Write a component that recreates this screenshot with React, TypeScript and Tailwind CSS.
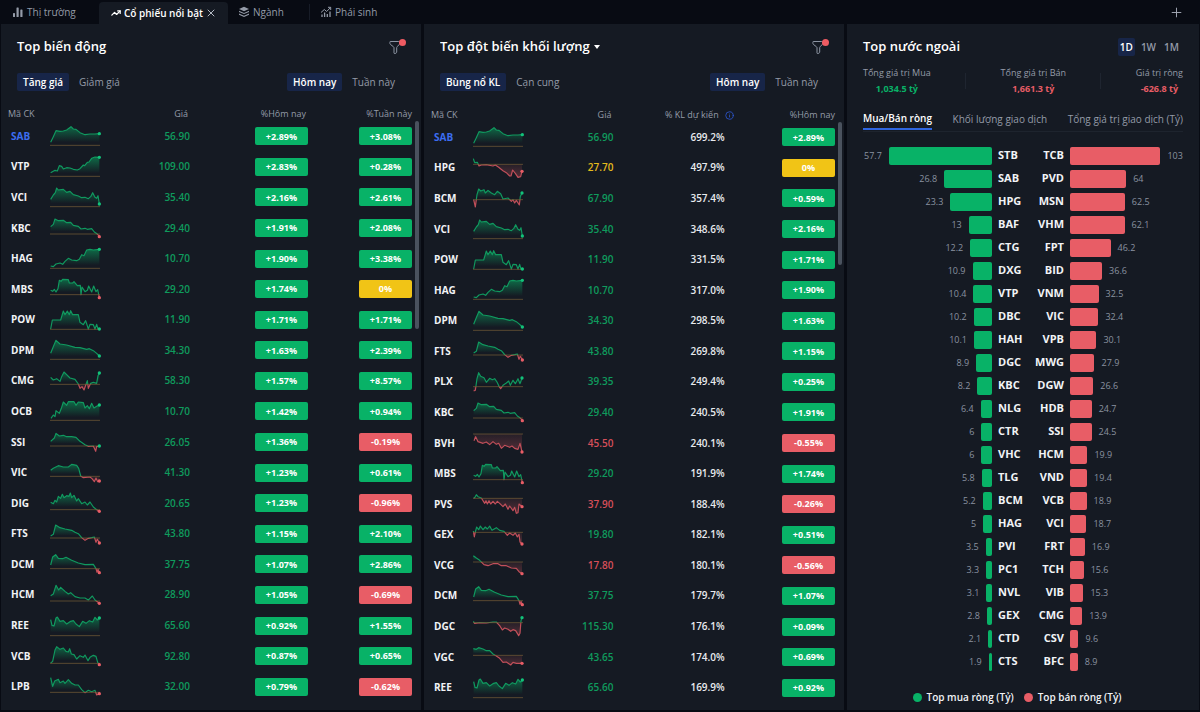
import { useId, useState } from "react";
import { Info, Plus, TrendingUp, X } from "lucide-react";

type Spark = { base: number; pts: string };

// Intraday lines, drawn on a 150x72 grid. "base" is the reference price level.
const SPARKS: Record<string, Spark> = {
    SAB: { base: 64, pts: "2,55 10,38 18,20 30,22 40,21 50,18 55,14 63,8 70,15 78,16 90,26 105,32 120,30 135,30 148,29" },
    VTP: { base: 64, pts: "2,53 15,46 22,48 28,32 35,34 40,42 50,38 60,39 70,43 82,45 90,41 100,30 104,32 112,22 117,21 125,10 135,6 148,7" },
    VCI: { base: 65, pts: "2,43 10,30 16,23 20,9 25,15 40,13 50,22 60,19 70,29 85,33 95,38 105,37 115,41 122,35 128,23 135,37 140,40 144,32 148,57" },
    KBC: { base: 54, pts: "2,32 10,25 15,9 25,14 40,13 50,20 62,19 70,28 85,31 93,39 105,37 112,40 125,38 133,48 142,54 148,62" },
    HAG: { base: 64, pts: "2,57 10,59 18,51 30,48 38,52 45,43 55,34 65,39 80,41 88,37 95,23 102,26 110,9 120,7 130,9 148,7" },
    MBS: { base: 53, pts: "2,40 8,43 13,37 18,45 24,35 28,10 33,13 38,7 55,8 58,18 68,18 72,14 82,26 91,25 93,53 96,30 105,44 112,40 116,27 125,45 131,27 138,44 143,38 148,62" },
    POW: { base: 64, pts: "2,63 7,36 32,36 40,9 45,20 52,9 58,20 62,8 68,20 85,20 90,43 100,50 107,38 115,63 120,49 130,50 135,63 140,49 144,63 148,63" },
    DPM: { base: 64, pts: "2,46 12,21 18,7 30,18 50,21 75,28 90,29 110,34 118,32 130,38 140,46 148,54" },
    CMG: { base: 46, pts: "2,25 10,33 20,29 30,37 35,23 42,9 50,17 60,27 75,31 85,45 90,58 96,53 102,63 112,35 115,58 122,43 130,40 140,43 144,20 148,12" },
    OCB: { base: 64, pts: "3,58 10,48 15,53 18,35 28,43 34,28 40,9 50,19 55,8 72,8 78,19 85,9 100,11 105,27 112,20 118,29 125,13 132,27 140,22 148,18" },
    SSI: { base: 48, pts: "2,34 13,24 18,10 28,18 40,16 50,20 65,20 78,22 90,34 105,44 115,49 130,48 137,64 140,50 148,48" },
    VIC: { base: 46, pts: "2,28 10,22 25,14 40,18 55,18 65,10 80,13 86,22 92,45 100,50 120,48 126,53 133,62 138,51 143,62 148,60" },
    DIG: { base: 56, pts: "2,34 10,38 15,28 20,33 25,16 32,22 37,10 42,20 50,14 57,16 61,6 65,20 72,13 80,30 85,23 95,38 105,33 112,42 120,33 130,48 140,56 148,61" },
    FTS: { base: 48, pts: "2,42 10,37 17,9 30,17 45,21 65,25 75,31 85,35 95,47 105,55 115,49 125,47 133,45 138,61 142,52 148,63" },
    DCM: { base: 50, pts: "2,39 8,15 17,8 25,19 38,20 48,16 65,25 85,33 105,38 130,37 138,50 141,61 144,52 148,62" },
    HCM: { base: 54, pts: "2,38 10,33 18,7 26,21 32,13 45,25 55,33 62,29 75,41 90,45 105,45 115,51 120,46 127,39 135,51 148,61" },
    REE: { base: 65, pts: "2,17 6,34 12,36 18,12 22,9 30,22 40,20 50,30 62,22 70,20 78,30 88,38 98,22 108,28 118,20 128,24 135,10 142,18 148,12" },
    VCB: { base: 58, pts: "2,57 8,52 15,18 20,8 30,16 40,12 48,22 55,24 59,14 64,30 72,32 80,45 90,35 100,40 105,33 114,50 120,40 130,34 138,37 143,55 148,62" },
    LPB: { base: 52, pts: "2,8 8,34 14,18 25,13 30,23 40,18 45,25 55,14 65,25 75,30 85,30 95,44 105,53 115,46 125,50 135,46 140,60 148,56" },
    HPG: { base: 25, pts: "1,8 5,20 13,19 18,30 25,27 40,26 60,30 67,27 77,34 90,44 100,50 110,60 114,60 119,42 127,52 135,64 143,62 147,46" },
    BCM: { base: 41, pts: "2,41 7,63 12,26 17,9 23,15 33,11 37,21 45,13 55,21 65,26 73,16 83,23 90,39 105,36 115,46 120,41 125,51 130,43 139,57 142,31 147,21" },
    PLX: { base: 50, pts: "2,63 7,61 12,26 17,8 23,19 33,23 40,37 50,25 58,29 65,26 72,36 78,49 83,56 90,46 100,39 107,33 112,46 120,31 127,41 135,26 141,41 147,24" },
    BVH: { base: 9, pts: "3,29 8,17 15,32 30,37 40,33 50,41 60,32 70,40 77,37 85,52 95,43 110,49 117,45 125,52 135,55 141,37 147,63" },
    PVS: { base: 19, pts: "2,19 6,16 10,8 15,14 25,18 35,34 39,26 43,36 48,26 53,36 60,28 67,36 73,28 80,34 90,44 97,36 105,52 110,42 120,56 125,46 130,64 135,62 138,36 147,44" },
    GEX: { base: 28, pts: "1,24 4,42 7,27 11,12 17,20 22,9 30,20 37,12 43,18 50,9 57,22 70,14 80,22 93,25 103,37 110,30 120,37 127,30 133,42 138,34 141,57 147,63" },
    VCG: { base: 27, pts: "1,8 10,15 20,22 33,35 45,38 60,32 75,32 85,38 100,38 115,45 130,46 138,56 147,62" },
    DGC: { base: 23, pts: "1,19 5,25 20,23 40,24 60,21 70,21 80,32 88,45 95,39 105,43 113,49 120,44 128,47 137,62 141,55 144,17 147,8" },
    VGC: { base: 31, pts: "1,11 10,13 17,8 30,12 40,17 50,17 60,27 70,33 80,40 90,52 100,51 113,60 120,52 130,55 147,55" },
};

// symbol, price, % today, % week
const MOVERS: [string, string, string, string][] = [
    ["SAB", "56.90", "+2.89%", "+3.08%"],
    ["VTP", "109.00", "+2.83%", "+0.28%"],
    ["VCI", "35.40", "+2.16%", "+2.61%"],
    ["KBC", "29.40", "+1.91%", "+2.08%"],
    ["HAG", "10.70", "+1.90%", "+3.38%"],
    ["MBS", "29.20", "+1.74%", "0%"],
    ["POW", "11.90", "+1.71%", "+1.71%"],
    ["DPM", "34.30", "+1.63%", "+2.39%"],
    ["CMG", "58.30", "+1.57%", "+8.57%"],
    ["OCB", "10.70", "+1.42%", "+0.94%"],
    ["SSI", "26.05", "+1.36%", "-0.19%"],
    ["VIC", "41.30", "+1.23%", "+0.61%"],
    ["DIG", "20.65", "+1.23%", "-0.96%"],
    ["FTS", "43.80", "+1.15%", "+2.10%"],
    ["DCM", "37.75", "+1.07%", "+2.86%"],
    ["HCM", "28.90", "+1.05%", "-0.69%"],
    ["REE", "65.60", "+0.92%", "+1.55%"],
    ["VCB", "92.80", "+0.87%", "+0.65%"],
    ["LPB", "32.00", "+0.79%", "-0.62%"],
];

// symbol, price, projected volume, % today
const VOLUMES: [string, string, string, string][] = [
    ["SAB", "56.90", "699.2%", "+2.89%"],
    ["HPG", "27.70", "497.9%", "0%"],
    ["BCM", "67.90", "357.4%", "+0.59%"],
    ["VCI", "35.40", "348.6%", "+2.16%"],
    ["POW", "11.90", "331.5%", "+1.71%"],
    ["HAG", "10.70", "317.0%", "+1.90%"],
    ["DPM", "34.30", "298.5%", "+1.63%"],
    ["FTS", "43.80", "269.8%", "+1.15%"],
    ["PLX", "39.35", "249.4%", "+0.25%"],
    ["KBC", "29.40", "240.5%", "+1.91%"],
    ["BVH", "45.50", "240.1%", "-0.55%"],
    ["MBS", "29.20", "191.9%", "+1.74%"],
    ["PVS", "37.90", "188.4%", "-0.26%"],
    ["GEX", "19.80", "182.1%", "+0.51%"],
    ["VCG", "17.80", "180.1%", "-0.56%"],
    ["DCM", "37.75", "179.7%", "+1.07%"],
    ["DGC", "115.30", "176.1%", "+0.09%"],
    ["VGC", "43.65", "174.0%", "+0.69%"],
    ["REE", "65.60", "169.9%", "+0.92%"],
];

// net buy, net sell
const FOREIGN: [string, number, string, number][] = [
    ["STB", 57.7, "TCB", 103],
    ["SAB", 26.8, "PVD", 64],
    ["HPG", 23.3, "MSN", 62.5],
    ["BAF", 13, "VHM", 62.1],
    ["CTG", 12.2, "FPT", 46.2],
    ["DXG", 10.9, "BID", 36.6],
    ["VTP", 10.4, "VNM", 32.5],
    ["DBC", 10.2, "VIC", 32.4],
    ["HAH", 10.1, "VPB", 30.1],
    ["DGC", 8.9, "MWG", 27.9],
    ["KBC", 8.2, "DGW", 26.6],
    ["NLG", 6.4, "HDB", 24.7],
    ["CTR", 6, "SSI", 24.5],
    ["VHC", 6, "HCM", 19.9],
    ["TLG", 5.8, "VND", 19.4],
    ["BCM", 5.2, "VCB", 18.9],
    ["HAG", 5, "VCI", 18.7],
    ["PVI", 3.5, "FRT", 16.9],
    ["PC1", 3.3, "TCH", 15.6],
    ["NVL", 3.1, "VIB", 15.3],
    ["GEX", 2.8, "CMG", 13.9],
    ["CTD", 2.1, "CSV", 9.6],
    ["CTS", 1.9, "BFC", 8.9],
];

function Sparkline({ symbol }: { symbol: string }) {
    const id = useId();
    const { base, pts } = SPARKS[symbol];
    const all = pts.split(" ");
    const [firstX] = all[0].split(",");
    const [lastX, lastY] = all[all.length - 1].split(",");
    const area = `${firstX},${base} ${pts} ${lastX},${base}`;
    return (
        <svg viewBox="0 0 150 72" width="50" height="24" className="block overflow-visible" aria-hidden="true">
            <defs>
                <linearGradient id={`${id}u`} x1="0" x2="0" y1="0" y2={base} gradientUnits="userSpaceOnUse">
                    <stop offset="0" stopColor="#08b267" stopOpacity="0.6" />
                    <stop offset="0.85" stopColor="#08b267" stopOpacity="0" />
                </linearGradient>
                <linearGradient id={`${id}d`} x1="0" x2="0" y1={base} y2="72" gradientUnits="userSpaceOnUse">
                    <stop offset="0" stopColor="#e85d66" stopOpacity="0.08" />
                    <stop offset="1" stopColor="#e85d66" stopOpacity="0.35" />
                </linearGradient>
                <clipPath id={`${id}a`}><rect x="-4" y="-4" width="160" height={base + 4} /></clipPath>
                <clipPath id={`${id}b`}><rect x="-4" y={base} width="160" height={80 - base} /></clipPath>
            </defs>
            <g clipPath={`url(#${id}a)`}>
                <polygon points={area} fill={`url(#${id}u)`} />
                <polyline points={pts} fill="none" stroke="#10995f" strokeWidth="3.5" strokeLinejoin="round" />
            </g>
            <g clipPath={`url(#${id}b)`}>
                <polygon points={area} fill={`url(#${id}d)`} />
                <polyline points={pts} fill="none" stroke="#c14f5a" strokeWidth="3.5" strokeLinejoin="round" />
            </g>
            <line x1="0" x2="150" y1={base} y2={base} stroke="#8a6a3a" strokeOpacity="0.7" strokeWidth="2.500" />
            <circle cx={lastX} cy={lastY} r="5" fill={Number(lastY) > base ? "#e85d66" : "#12c27a"} />
        </svg>
    );
}

function Badge({ value }: { value: string }) {
    const color = value === "0%" ? "bg-[#f1c416]" : value.startsWith("-") ? "bg-[#e85d66]" : "bg-[#08b267]";
    return (
        <span className={`ml-auto flex h-[18px] w-[53px] items-center justify-center rounded-[2px] text-[9px] font-bold text-white ${color}`}>
            {value}
        </span>
    );
}

function priceColor(pct: string) {
    if (pct === "0%") return "text-[#e5bb1c]";
    return pct.startsWith("-") ? "text-[#d64f5a]" : "text-[#0f9b5d]";
}

function FilterButton() {
    return (
        <button type="button" aria-label="Bộ lọc" className="relative h-4 w-4">
            <svg viewBox="0 0 16 16" width="16" height="16" fill="none" stroke="#8d95a3" strokeWidth="1" strokeLinejoin="round">
                <path d="M1.200 2.500h8.600c.7 0 1 .3 1 .9v.9c0 .5-.2.8-.6 1.200L8.200 7.700c-.3.300-.5.600-.5 1v4.300c0 .5-.2.800-.6 1l-1 .5c-.6.3-1.100 0-1.100-.6V8.800c0-.4-.2-.7-.5-1L1.500 5.500c-.4-.4-.6-.8-.6-1.200V3.400c0-.6.2-.9.300-.9Z" />
            </svg>
            <span className="absolute -right-px top-0 h-[7px] w-[7px] rounded-full bg-[#ef5b62]" />
        </button>
    );
}

function Pills({ items }: { items: string[] }) {
    const [active, setActive] = useState(items[0]);
    return (
        <div className="flex gap-1">
            {items.map((item) => (
                <button
                    key={item}
                    type="button"
                    onClick={() => setActive(item)}
                    className={`h-[18px] rounded-[2px] px-[6px] text-[10px] leading-[18px] ${item === active ? "bg-[#172548] font-semibold text-white" : "text-[#949ba8]"}`}
                >
                    {item}
                </button>
            ))}
        </div>
    );
}

function SymbolCell({ symbol }: { symbol: string }) {
    return (
        <td className={`py-0 pl-1 text-[10px] font-bold ${symbol === "SAB" ? "text-[#3c6df0]" : "text-[#f1f3f6]"}`}>{symbol}</td>
    );
}

function BarsIcon() {
    return (
        <svg viewBox="0 0 12 12" width="12" height="12" fill="#949ba8" aria-hidden="true">
            <rect x="1" y="7" width="2" height="4" rx="0.6" />
            <rect x="4.500" y="1.500" width="2.200" height="9.500" rx="0.6" />
            <rect x="8.300" y="3.500" width="2.200" height="7.500" rx="0.6" />
        </svg>
    );
}

function LayersIcon() {
    return (
        <svg viewBox="0 0 12 12" width="12" height="12" fill="#949ba8" aria-hidden="true">
            <path d="M6 .8 11 3 6 5.200 1 3Z" />
            <path d="M1 4.800 6 7l5-2.200v1.100L6 8.100 1 5.900Z" />
            <path d="M1 7.600 6 9.800l5-2.200v1.200L6 11 1 8.800Z" />
        </svg>
    );
}

function DerivativesIcon() {
    return (
        <svg viewBox="0 0 12 12" width="12" height="12" fill="none" stroke="#949ba8" strokeWidth="1" aria-hidden="true">
            <path d="M2 11V8.500M4.600 11V6.500M7.300 11V8M10 11V5.500" strokeWidth="1.300" />
            <path d="M1 6.500 4.300 3.500 6.700 5.500 10.500 1.500M8 1.300h2.700V4" />
        </svg>
    );
}

function MoversPanel() {
    return (
        <section className="flex min-w-0 flex-col bg-[#151a23] pb-2 pt-[13px]">
            <div className="flex h-5 items-center justify-between px-4">
                <h2 className="text-[13px] font-semibold text-white">Top biến động</h2>
                <FilterButton />
            </div>
            <div className="mt-4 flex justify-between pl-4 pr-5">
                <Pills items={["Tăng giá", "Giảm giá"]} />
                <Pills items={["Hôm nay", "Tuần này"]} />
            </div>
            <div className="mt-4 flex min-h-0 flex-1 gap-[3px] pl-[6px] pr-0.5">
                <table className="h-full w-full table-fixed border-collapse">
                    <colgroup>
                        <col className="w-[43px]" />
                        <col className="w-[50px]" />
                        <col className="w-[90px]" />
                        <col className="w-[118px]" />
                        <col className="w-[104px]" />
                    </colgroup>
                    <thead>
                        <tr className="h-[14px] text-right text-[9px] leading-[14px] text-[#949ba8]">
                            <th colSpan={2} className="p-0 pl-px text-left font-normal">Mã CK</th>
                            <th className="p-0 pr-0.5 font-normal">Giá</th>
                            <th className="p-0 pr-0.5 font-normal">%Hôm nay</th>
                            <th className="p-0 font-normal">%Tuần này</th>
                        </tr>
                    </thead>
                    <tbody>
                        {MOVERS.map(([symbol, price, day, week]) => (
                            <tr key={symbol}>
                                <SymbolCell symbol={symbol} />
                                <td className="p-0"><Sparkline symbol={symbol} /></td>
                                <td className={`p-0 text-right text-[10px] font-semibold ${priceColor(day)}`}>{price}</td>
                                <td className="p-0"><Badge value={day} /></td>
                                <td className="p-0"><Badge value={week} /></td>
                            </tr>
                        ))}
                    </tbody>
                </table>
                <div className="mt-[14px] h-[208px] w-1 shrink-0 rounded-full bg-[#4a525e]" />
            </div>
        </section>
    );
}

function VolumePanel() {
    return (
        <section className="flex min-w-0 flex-col bg-[#151a23] pb-[7px] pt-[13px]">
            <div className="flex h-5 items-center justify-between px-4">
                <div className="flex items-center gap-1">
                    <select aria-label="Danh sách" className="appearance-none bg-transparent text-[13px] font-semibold text-white">
                        <option>Top đột biến khối lượng</option>
                    </select>
                    <svg viewBox="0 0 6 4" width="6" height="4" fill="#fff" aria-hidden="true"><path d="M0 0h6L3 4Z" /></svg>
                </div>
                <FilterButton />
            </div>
            <div className="mt-4 flex justify-between pl-4 pr-5">
                <Pills items={["Bùng nổ KL", "Cạn cung"]} />
                <Pills items={["Hôm nay", "Tuần này"]} />
            </div>
            <div className="mt-[17px] flex min-h-0 flex-1 gap-[3px] pl-[6px] pr-0.5">
                <table className="h-full w-full table-fixed border-collapse">
                    <colgroup>
                        <col className="w-[43px]" />
                        <col className="w-[50px]" />
                        <col className="w-[90px]" />
                        <col className="w-[111px]" />
                        <col className="w-[110px]" />
                    </colgroup>
                    <thead>
                        <tr className="h-[14px] text-right text-[9px] leading-[14px] text-[#949ba8]">
                            <th colSpan={2} className="p-0 pl-px text-left font-normal">Mã CK</th>
                            <th className="p-0 pr-0.5 font-normal">Giá</th>
                            <th className="p-0 font-normal">
                                <span className="-mr-[9px] flex items-center justify-end gap-[6px] whitespace-nowrap">
                                    % KL dự kiến
                                    <Info size={9} color="#2f5ce0" />
                                </span>
                            </th>
                            <th className="p-0 font-normal">%Hôm nay</th>
                        </tr>
                    </thead>
                    <tbody>
                        {VOLUMES.map(([symbol, price, volume, day]) => (
                            <tr key={symbol}>
                                <SymbolCell symbol={symbol} />
                                <td className="p-0"><Sparkline symbol={symbol} /></td>
                                <td className={`p-0 text-right text-[10px] font-semibold ${priceColor(day)}`}>{price}</td>
                                <td className="p-0 text-right text-[10px] font-semibold text-[#e8eaee]">{volume}</td>
                                <td className="p-0"><Badge value={day} /></td>
                            </tr>
                        ))}
                    </tbody>
                </table>
                <div className="mt-[14px] h-[143px] w-1 shrink-0 rounded-full bg-[#4a525e]" />
            </div>
        </section>
    );
}

function ForeignPanel() {
    const maxBuy = FOREIGN[0][1];
    const maxSell = FOREIGN[0][3];
    return (
        <section className="flex min-w-0 flex-col bg-[#151a23] px-4 pt-[13px]">
            <div className="flex h-5 items-center justify-between">
                <h2 className="text-[13px] font-semibold text-white">Top nước ngoài</h2>
                <div className="flex text-[10px] font-semibold leading-[18px] text-[#949ba8]">
                    <button type="button" className="rounded-[2px] bg-[#172548] px-0.5 text-white">1D</button>
                    <button type="button" className="ml-[6px]">1W</button>
                    <button type="button" className="ml-2 mr-1">1M</button>
                </div>
            </div>
            <dl className="mt-2 flex justify-between text-center text-[9px] leading-4">
                <div>
                    <dt className="text-[#949ba8]">Tổng giá trị Mua</dt>
                    <dd className="font-bold text-[#08b267]">1,034.5 tỷ</dd>
                </div>
                <div className="my-2 w-px bg-[#1f2530]" />
                <div>
                    <dt className="text-[#949ba8]">Tổng giá trị Bán</dt>
                    <dd className="font-bold text-[#e85d66]">1,661.3 tỷ</dd>
                </div>
                <div className="my-2 w-px bg-[#1f2530]" />
                <div>
                    <dt className="text-[#949ba8]">Giá trị ròng</dt>
                    <dd className="font-bold text-[#e85d66]">-626.8 tỷ</dd>
                </div>
            </dl>
            <div className="mt-[11px] flex h-6 justify-between whitespace-nowrap border-b border-[#1e242e] text-[10px] leading-5 text-[#949ba8]">
                <button type="button" className="h-[22px] border-b-2 border-[#2f66e0] font-semibold text-white">Mua/Bán ròng</button>
                <button type="button" className="h-[22px]">Khối lượng giao dịch</button>
                <button type="button" className="h-[22px]">Tổng giá trị giao dịch (Tỷ)</button>
            </div>
            <ul className="mt-3">
                {FOREIGN.map(([buy, buyValue, sell, sellValue]) => (
                    <li key={buy} className="grid h-[23px] grid-cols-[129fr_78px_113fr] items-center text-[9px] text-[#8a92a0]">
                        <div className="flex items-center justify-end gap-[7px]">
                            <span>{buyValue}</span>
                            <div className="h-[18px] shrink-0 rounded-[2px] bg-[#08b267]" style={{ width: `${(buyValue / maxBuy) * 80}%` }} />
                        </div>
                        <div className="flex justify-between px-[6px] text-[11px] font-bold text-[#f1f3f6]">
                            <span>{buy}</span>
                            <span>{sell}</span>
                        </div>
                        <div className="flex items-center gap-[7px]">
                            <div className="h-[18px] shrink-0 rounded-[2px] bg-[#e85d66]" style={{ width: `${(sellValue / maxSell) * 80}%` }} />
                            <span>{sellValue}</span>
                        </div>
                    </li>
                ))}
            </ul>
            <div className="mt-4 flex items-center justify-center gap-[10px] pr-3 text-[10px] font-semibold leading-4 text-[#f1f3f6]">
                <span className="flex items-center gap-[5px]">
                    <span className="h-[9px] w-[9px] rounded-full bg-[#08b267]" />
                    Top mua ròng (Tỷ)
                </span>
                <span className="flex items-center gap-[5px]">
                    <span className="h-[9px] w-[9px] rounded-full bg-[#e85d66]" />
                    Top bán ròng (Tỷ)
                </span>
            </div>
        </section>
    );
}

export default function App() {
    return (
        <div className="flex min-h-screen flex-col bg-[#080b13] font-['Open_Sans','Noto_Sans',sans-serif]">
            <nav className="flex h-6 items-center justify-between pr-4 text-[10px] text-[#949ba8]">
                <div className="flex h-full items-center pl-3">
                    <button type="button" className="flex w-[87px] items-center gap-[3px]">
                        <BarsIcon />
                        Thị trường
                    </button>
                    <div className="mt-0.5 flex h-[22px] w-[129px] items-center rounded-t-[4px] bg-[#151a23] pl-3">
                        <button type="button" className="flex items-center gap-[3px] whitespace-nowrap font-semibold text-white">
                            <TrendingUp size={10} strokeWidth={3} />
                            Cổ phiếu nổi bật
                        </button>
                        <button type="button" aria-label="Đóng" className="ml-0.5"><X size={12} color="#b3b9c3" /></button>
                    </div>
                    <button type="button" className="ml-[10px] flex w-[71px] items-center gap-[3px]">
                        <LayersIcon />
                        Ngành
                    </button>
                    <button type="button" className="flex h-4 items-center gap-[3px] border-l border-[#171c27] pl-[10px]">
                        <DerivativesIcon />
                        Phái sinh
                    </button>
                </div>
                <button type="button" aria-label="Thêm"><Plus size={15} color="#a5abb6" strokeWidth={1.5} /></button>
            </nav>
            <main className="grid flex-1 grid-cols-[420fr_420fr_352fr] gap-[3px] px-px pb-0.5">
                <MoversPanel />
                <VolumePanel />
                <ForeignPanel />
            </main>
        </div>
    );
}
